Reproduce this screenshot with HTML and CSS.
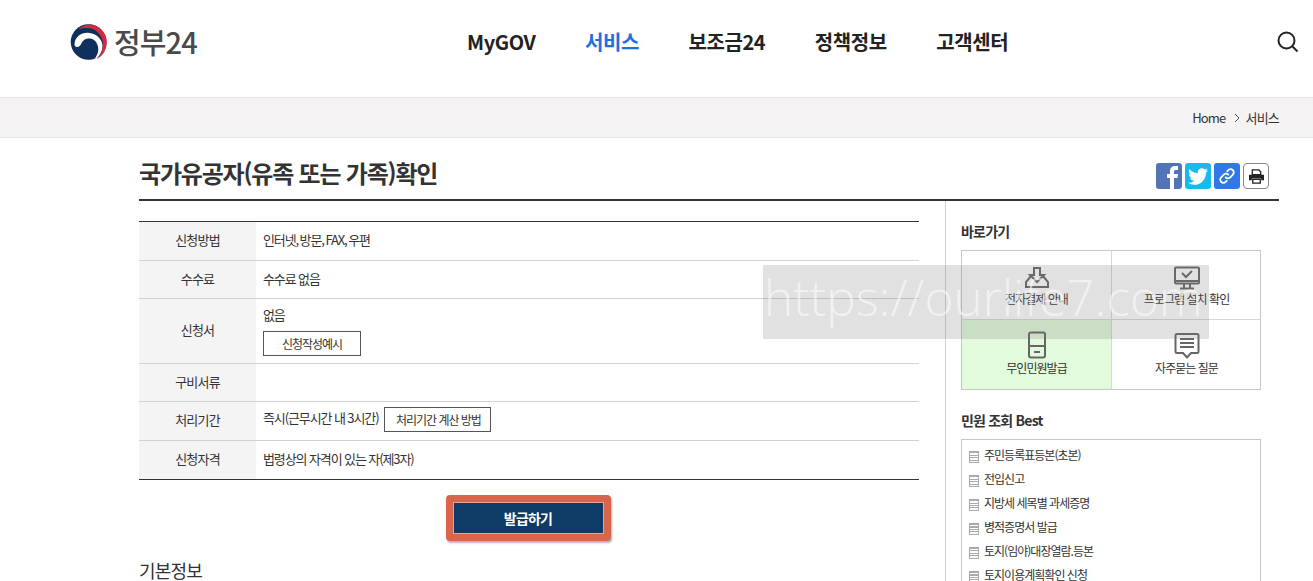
FILE: index.html
```html
<!DOCTYPE html>
<html lang="ko">
<head>
<meta charset="utf-8">
<title>국가유공자(유족 또는 가족)확인 | 정부24</title>
<link rel="stylesheet" href="styles.css">
</head>
<body>
<header class="top">
  <a class="logo">
    <svg class="emblem" width="38" height="36" viewBox="0 0 38 36">
      <circle cx="18.500" cy="18" r="17.800" fill="#0f2f5c"/>
      <path d="M33 14C35 20 34.500 30 26 35.800L36 27z" fill="#fff"/>
      <path d="M4.500 20C5 13 11 8.500 18 8.800 26 9.200 32.800 15 32.500 22.500 32.300 28 29 33 24.500 35.200 27.500 31 29 27 28 22.500 27 18 24 15 20 14.500 16 14 13 16 11.500 19 10.500 22 8.500 23.500 6.500 23 5 22.500 4.500 21.500 4.500 20z" fill="#fff"/>
      <path d="M8.500 5C12 2 16 .5 20 .5 29.500 1 37 9 36.800 18.500 36.700 26 32.500 32.500 26.500 35.300 30.500 31.500 33 26.500 33 20.500 33 12 26.500 4.500 18 4 14.500 3.800 11.500 4 8.500 5z" fill="#d9273f"/>
    </svg>
    <span class="logo-text">정부24</span>
  </a>
  <nav class="gnb">
    <a>MyGOV</a>
    <a class="on">서비스</a>
    <a>보조금24</a>
    <a>정책정보</a>
    <a>고객센터</a>
  </nav>
  <svg class="search" width="24" height="24" viewBox="0 0 24 24" fill="none" stroke="#222" stroke-width="2">
    <circle cx="10.500" cy="10.500" r="8"/><path d="M16.500 16.500l5 5"/>
  </svg>
</header>

<div class="crumb">
  <div class="crumb-in">
    <span>Home</span>
    <svg width="6" height="10" viewBox="0 0 6 10" fill="none" stroke="#555" stroke-width="1"><path d="M1 1l4 4-4 4"/></svg>
    <span>서비스</span>
  </div>
</div>

<main class="wrap">
  <div class="title-row">
    <h1>국가유공자(유족 또는 가족)확인</h1>
    <div class="share">
      <span class="sq fb"><svg width="26" height="26" viewBox="0 0 26 26"><path d="M14 26V15h-3v-4h3V8c0-3 2-5 5-5h3v4h-2c-1.500 0-2 .6-2 2v2h4l-.6 4H18v11z" fill="#fff"/></svg></span>
      <span class="sq tw"><svg width="20" height="17" viewBox="0 0 24 20"><path d="M24 2.400c-.9.400-1.800.7-2.800.8 1-.6 1.800-1.600 2.200-2.700-1 .6-2 1-3.100 1.200C19.300.7 18 0 16.600 0c-2.700 0-4.900 2.200-4.900 4.900 0 .4 0 .8.100 1.100C7.700 5.800 4.100 3.900 1.700.9 1.200 1.600 1 2.500 1 3.400c0 1.700.9 3.200 2.200 4.100-.8 0-1.600-.2-2.200-.6v.1c0 2.400 1.700 4.400 3.900 4.800-.4.100-.8.200-1.300.2-.3 0-.6 0-.9-.1.600 2 2.400 3.400 4.600 3.400-1.700 1.300-3.800 2.100-6.100 2.100-.4 0-.8 0-1.200-.1C2.200 19.200 4.800 20 7.500 20c9.100 0 14-7.500 14-14v-.6c1-.7 1.800-1.600 2.500-3z" fill="#fff"/></svg></span>
      <span class="sq ln"><svg width="18" height="18" viewBox="0 0 20 20" fill="none" stroke="#fff" stroke-width="2" stroke-linecap="round"><path d="M8.500 11.500a3.500 3.500 0 0 0 5 0l3-3a3.500 3.500 0 0 0-5-5l-1.200 1.200"/><path d="M11.500 8.500a3.500 3.500 0 0 0-5 0l-3 3a3.500 3.500 0 0 0 5 5l1.200-1.200"/></svg></span>
      <span class="sq pr"><svg width="17" height="15" viewBox="0 0 18 16"><path d="M4.500 1h7l2 2v3h-9z" fill="none" stroke="#222" stroke-width="1.400"/><path d="M1 6h16v6h-3v-2H4v2H1z" fill="#222"/><path d="M5 11h8v4H5z" fill="none" stroke="#222" stroke-width="1.400"/></svg></span>
    </div>
  </div>

  <div class="cols">
    <section class="content">
      <table class="info">
        <tr><th>신청방법</th><td class="method">인터넷, 방문, FAX, 우편</td></tr>
        <tr class="short"><th>수수료</th><td>수수료 없음</td></tr>
        <tr class="tall"><th>신청서</th><td><div>없음</div><a class="btn-line first">신청작성예시</a></td></tr>
        <tr class="short"><th>구비서류</th><td></td></tr>
        <tr><th>처리기간</th><td>즉시(근무시간 내 3시간) <a class="btn-line second">처리기간 계산 방법</a></td></tr>
        <tr><th>신청자격</th><td>법령상의 자격이 있는 자(제3자)</td></tr>
      </table>
      <div class="issue-row"><a class="issue">발급하기</a></div>
      <h2 class="basic">기본정보</h2>
    </section>

    <aside class="side">
      <h3 class="side-h">바로가기</h3>
      <div class="quick">
        <a class="q">
          <svg class="ico-low" width="24" height="21" viewBox="0 0 24 21" fill="none" stroke="#666" stroke-width="2"><path d="M9 1h6v7h4l-7 7-7-7h4z"/><path d="M6 9l-5 6v5h22v-5l-5-6"/></svg>
          <span>전자결제 안내</span>
        </a>
        <a class="q">
          <svg width="28" height="24" viewBox="0 0 28 24" fill="none" stroke="#666" stroke-width="2"><rect x="2" y="1.500" width="24" height="16" rx="1"/><path d="M2 15h24"/><path d="M9 7l4 4 6-6"/><path d="M11 18v4M17 18v4M7 22.500h14"/></svg>
          <span>프로그램 설치 확인</span>
        </a>
        <a class="q green">
          <svg width="20" height="28" viewBox="0 0 20 28" fill="none" stroke="#666" stroke-width="2"><rect x="2" y="1.500" width="16" height="25" rx="2"/><path d="M2 15h16M7 21h6"/></svg>
          <span>무인민원발급</span>
        </a>
        <a class="q">
          <svg width="26" height="27" viewBox="0 0 26 27" fill="none" stroke="#666" stroke-width="2"><path d="M3 2h20a1.500 1.500 0 0 1 1.500 1.500v16a1.500 1.500 0 0 1-1.500 1.500h-6l-4 4.500L9 21H3a1.500 1.500 0 0 1-1.500-1.500v-16A1.500 1.500 0 0 1 3 2z"/><path d="M6 7h14M6 11h14M6 15h14"/></svg>
          <span>자주묻는 질문</span>
        </a>
      </div>
      <h3 class="side-h best-h">민원 조회 Best</h3>
      <ul class="best">
        <li>주민등록표등본(초본)</li>
        <li>전입신고</li>
        <li>지방세 세목별 과세증명</li>
        <li>병적증명서 발급</li>
        <li>토지(임야)대장열람.등본</li>
        <li>토지이용계획확인 신청</li>
      </ul>
    </aside>
  </div>
</main>

<div class="mark">https://ourlife7.com</div>
</body>
</html>
```

FILE: styles.css
```css
* { box-sizing: border-box; }
html, body { margin: 0; height: 581px; overflow: hidden; }
body { font-family: "Noto Sans CJK KR", "Noto Sans", sans-serif; color: #333; background: #fff; letter-spacing: -0.05em; }
h1, h2, h3, ul { margin: 0; padding: 0; }

.top { height: 97px; display: flex; align-items: flex-start; position: relative; }
.logo { display: flex; align-items: center; gap: 6px; margin: 23px 0 0 70px; height: 36px; width: 130px; }
.emblem { margin-top: 2px; }
.logo-text { font-size: 29px; line-height: 36px; color: #4a4a4a; font-weight: 500; letter-spacing: -0.03em; white-space: nowrap; }
.gnb { display: flex; gap: 49.500px; margin: 27px 0 0 267px; font-size: 20px; line-height: 30px; font-weight: 700; color: #222; white-space: nowrap; letter-spacing: -0.02em; }
.gnb .on { color: #1f6fe0; }
.search { position: absolute; left: 1276px; top: 30px; }

.crumb { height: 41px; background: #f5f3f3; border-top: 1px solid #e6e4e4; border-bottom: 1px solid #e6e4e4; }
.crumb-in { display: flex; justify-content: flex-end; align-items: center; gap: 7px; height: 39px; padding-right: 34px; font-size: 13px; color: #333; }
.crumb-in svg { margin-left: 1px; margin-right: -1px; }

.wrap { width: 1140px; margin-left: 139px; }
.title-row { height: 63px; display: flex; justify-content: space-between; align-items: flex-start; border-bottom: 2px solid #333; }
h1 { font-size: 24px; line-height: 36px; margin-top: 17px; font-weight: 700; color: #333; letter-spacing: -0.05em; }
.share { display: flex; gap: 3px; margin-top: 25px; margin-right: 10px; }
.sq { width: 26px; height: 26px; border-radius: 3px; display: flex; align-items: center; justify-content: center; overflow: hidden; }
.fb { background: #5274b5; }
.tw { background: #18b9ee; }
.ln { background: #2f78e6; }
.pr { background: #fff; border: 1px solid #888; border-radius: 4px; }

.cols { display: flex; }
.content { width: 806px; padding-right: 26px; }
.info { width: 780px; margin-top: 20px; border-collapse: collapse; border-top: 1px solid #333; border-bottom: 1px solid #333; font-size: 13px; table-layout: fixed; }
.info th { width: 117px; background: #f4f4f4; font-weight: 400; color: #333; text-align: center; padding: 0 0 3px; height: 39px; letter-spacing: -0.06em; }
.info .short th { height: 38px; }
.info td { padding: 0 7px 3px; color: #333; letter-spacing: -0.085em; }
.info .method { word-spacing: -1px; }
.info tr + tr th, .info tr + tr td { border-top: 1px solid #d2d2d2; }
.info .tall th { height: 65px; padding-bottom: 4px; }
.info .tall td { padding-bottom: 1px; }
.btn-line { display: inline-flex; align-items: center; justify-content: center; height: 25px; border: 1px solid #555; font-size: 12px; color: #333; background: #fff; vertical-align: middle; letter-spacing: -0.085em; }
.btn-line.second { margin-left: 3px; padding: 0 9px 0 11px; }
.btn-line.first { margin: 7px 0 0; width: 98px; padding: 0; }

.issue-row { display: flex; justify-content: center; margin-top: 15px; padding-right: 2px; }
.issue { width: 165px; height: 46px; border: 7px solid #d9664a; border-radius: 4px; background: #0e3a66; box-shadow: inset 0 0 0 1px #e8a392, 1px 2px 2px rgba(0,0,0,.3); color: #fff; font-size: 14px; font-weight: 700; display: flex; align-items: center; justify-content: center; }
.basic { font-size: 18px; line-height: 26px; font-weight: 400; color: #333; margin-top: 16px; }

.side { width: 334px; height: 400px; border-left: 1px solid #d2d2d2; padding: 20px 0 0 15px; }
.side-h { font-size: 14px; line-height: 20px; font-weight: 700; color: #333; }
.quick { width: 300px; height: 140px; margin-top: 9px; border: 1px solid #c8c8c8; display: grid; grid-template-columns: 150px 149px; grid-template-rows: 69px 69px; }
.q { display: flex; flex-direction: column; align-items: center; justify-content: flex-end; gap: 1px; padding-bottom: 12px; font-size: 12px; line-height: 16px; color: #333; white-space: nowrap; letter-spacing: -0.08em; }
.q:nth-child(n+3) { padding-bottom: 13px; }
.q:nth-child(odd) { border-right: 1px solid #d8d8d8; }
.q:nth-child(-n+2) { border-bottom: 1px solid #d8d8d8; }
.ico-low { margin-bottom: 2px; }
.green { background: #e2fbdc; }
.best-h { margin-top: 20px; }
.best { width: 300px; margin-top: 9px; height: 160px; border: 1px solid #c8c8c8; border-bottom: 0; padding: 3px 0 0 22px; list-style: none; font-size: 12px; overflow: hidden; letter-spacing: -0.082em; }
.best li { line-height: 24px; height: 24px; position: relative; color: #333; }
.best li::before { content: ""; position: absolute; left: -15px; top: 8px; width: 8px; height: 10px; border: 1px solid #aaa; background: repeating-linear-gradient(#aaa 0 1px, #fff 1px 2.500px); }

.mark { position: absolute; left: 763px; top: 265px; width: 446px; height: 74px; background: rgba(120,120,120,.22); color: rgba(255,255,255,.55); font-family: "Open Sans", sans-serif; font-size: 49.500px; line-height: 64px; letter-spacing: 0; white-space: nowrap; padding-left: 1px; font-weight: 300; }
```
